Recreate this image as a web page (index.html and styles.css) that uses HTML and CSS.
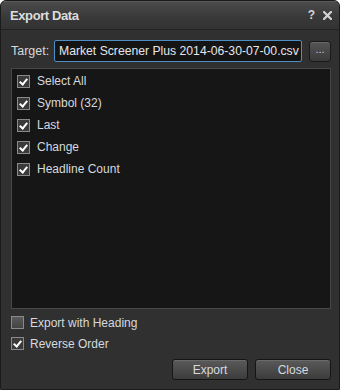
FILE: index.html
```html
<!DOCTYPE html>
<html>
<head>
<meta charset="utf-8">
<link rel="stylesheet" href="styles.css">
</head>
<body>
<div class="window">
  <div class="titlebar">
    <span class="title">Export Data</span>
    <span class="title-icons">
      <span class="help">?</span>
      <svg class="close" width="9" height="9" viewBox="0 0 9 9"><path d="M1 1L8 8M8 1L1 8" stroke="#d4d4d4" stroke-width="2.2" stroke-linecap="square"/></svg>
    </span>
  </div>
  <div class="content">
    <div class="target-row">
      <label class="target-label">Target:</label>
      <div class="target-input">Market Screener Plus 2014-06-30-07-00.csv</div>
      <button class="browse">...</button>
    </div>
    <div class="list">
      <div class="item"><span class="cb checked"></span>Select All</div>
      <div class="item"><span class="cb checked"></span>Symbol (32)</div>
      <div class="item"><span class="cb checked"></span>Last</div>
      <div class="item"><span class="cb checked"></span>Change</div>
      <div class="item"><span class="cb checked"></span>Headline Count</div>
    </div>
    <div class="options">
      <div class="opt"><span class="cb"></span>Export with Heading</div>
      <div class="opt"><span class="cb checked"></span>Reverse Order</div>
    </div>
    <div class="buttons">
      <button class="btn">Export</button>
      <button class="btn">Close</button>
    </div>
  </div>
</div>
</body>
</html>
```
FILE: styles.css
```css
html { background: #ffffff; }
body { margin: 0; font-family: "Liberation Sans", Arial, sans-serif; font-size: 12px; color: #d6d9de; }

.window {
  width: 340px; height: 390px; box-sizing: border-box;
  border: 1px solid #1b1b1b; border-radius: 6px 6px 0 0;
  background: #303030; display: flex; flex-direction: column; overflow: hidden;
}
.titlebar {
  height: 28px; flex: none; display: flex; align-items: center; justify-content: space-between;
  padding: 0 7px 0 9px;
  background: linear-gradient(#4c4c4c, #383838 60%, #333333);
  border-bottom: 1px solid #232323;
  box-shadow: inset 0 1px 0 #5a5a5a;
}
.title { font-weight: bold; font-size: 13px; color: #dcdcdc; letter-spacing: -0.4px; }
.title-icons { display: flex; align-items: center; gap: 8px; font-weight: bold; color: #d4d4d4; font-size: 12px; }

.content { flex: 1; display: flex; flex-direction: column; padding: 10px 8px 0 10px; }
.target-row { display: flex; align-items: center; height: 22px; }
.target-label { width: 43px; flex: none; font-size: 12.5px; }
.target-input {
  width: 248px; height: 22px; box-sizing: border-box; flex: none;
  border: 1px solid #4f8ec4; border-radius: 2px; background: #141414;
  color: #e4e6ea; padding: 0 0 0 4px; line-height: 20px; white-space: nowrap; overflow: hidden;
  font-size: 12.2px;
}
.browse {
  margin-left: 7px; width: 22px; height: 21px; padding: 0 0 4px; box-sizing: border-box;
  border: 1px solid #1a1a1a; border-radius: 3px;
  background: linear-gradient(#555555, #3a3a3a); color: #cfcfcf; font: 11px "Liberation Sans", sans-serif;
  box-shadow: inset 0 1px 0 #666;
}

.list {
  margin-top: 6px; height: 241px; box-sizing: border-box;
  border: 1px solid #474747; background: #161616;
  padding: 1px 0 0 5px; display: flex; flex-direction: column;
}
.item { height: 22px; display: flex; align-items: center; gap: 7px; }

.cb {
  width: 13px; height: 13px; box-sizing: border-box; flex: none;
  border: 1px solid #8a8a8a; background: linear-gradient(#5a5a5a, #444444);
  position: relative;
}
.cb.checked { background: #3a3a3a; }
.cb.checked::after {
  content: ""; position: absolute; left: 3px; top: 1px; width: 3px; height: 6px;
  border: solid #ffffff; border-width: 0 2px 2px 0; transform: rotate(40deg);
}

.options { display: flex; flex-direction: column; margin-top: 3px; }
.opt { height: 21px; display: flex; align-items: center; gap: 6px; }

.buttons { display: flex; justify-content: flex-end; gap: 7px; margin-top: 5px; }
.btn {
  width: 76px; height: 21px; box-sizing: border-box;
  border: 1px solid #151515; border-radius: 3px;
  background: linear-gradient(#5a5a5a, #3c3c3c);
  box-shadow: inset 0 1px 0 #6a6a6a;
  color: #d6d9de; font: 12px "Liberation Sans", Arial, sans-serif;
}
```
